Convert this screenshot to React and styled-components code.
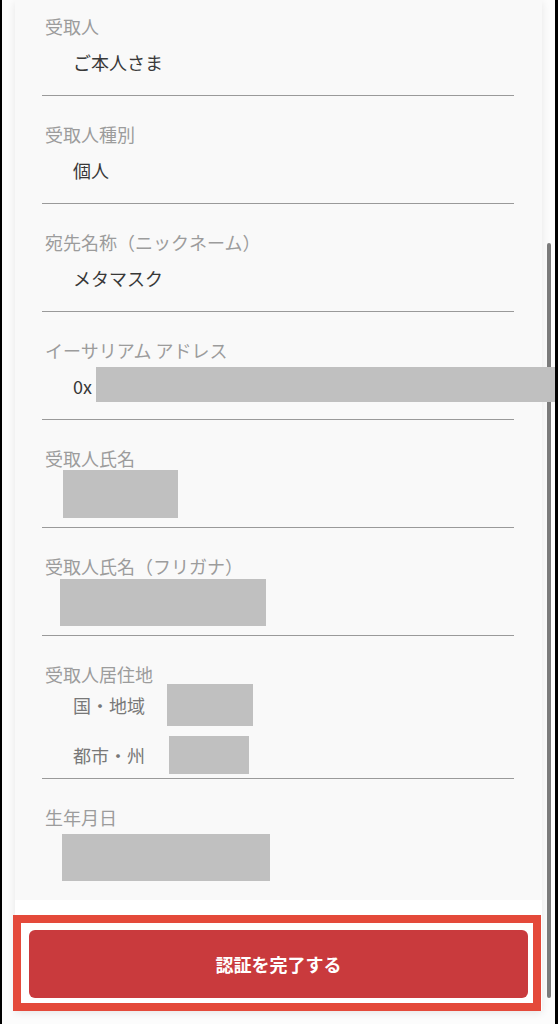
import React from 'react';
import styled, { createGlobalStyle } from 'styled-components';

const GlobalStyle = createGlobalStyle`
  html, body {
    margin: 0;
    padding: 0;
    background: #000;
  }
  body {
    font-family: "Noto Sans CJK JP", "Noto Sans", sans-serif;
  }
`;

const Screen = styled.div`
  position: relative;
  margin: 0 3px 0 2px;
  height: 1024px;
  background: #fcfcfc;
  overflow: hidden;
`;

const Panel = styled.div`
  margin: 0 13px 0 13px;
  height: 1011px;
  display: flex;
  flex-direction: column;
  background: #fff;
  box-shadow: 0 2px 8px rgba(0, 0, 0, 0.09);
`;

const Scroller = styled.div`
  flex: 1;
  background: #f9f9f9;
  padding: 0 28px 0 27px;
`;

const Field = styled.div`
  padding: ${p => (p.$first ? '14px' : '26px')} 0 ${p => p.$bottom ?? 19}px;
  border-bottom: ${p => (p.$last ? 'none' : '1px solid #9a9a9a')};
`;

const Label = styled.div`
  padding: 0 0 2px 3px;
  font-size: 18px;
  line-height: 24px;
  color: #9c9c9c;
`;

const Value = styled.div`
  margin-top: 8px;
  padding-left: 31px;
  height: 28px;
  display: flex;
  align-items: center;
  font-size: 18px;
  color: #383838;
`;

const Redacted = styled.div`
  position: relative;
  z-index: 2;
  flex: none;
  width: ${p => p.$w}px;
  height: ${p => p.$h}px;
  margin-top: ${p => p.$top || 0}px;
  margin-left: ${p => p.$left || 0}px;
  background: #c0c0c0;
`;

const SubRows = styled.div`
  margin-top: -4px;
  display: flex;
  flex-direction: column;
  gap: 10px;
  padding-left: 31px;
`;

const SubRow = styled.div`
  display: grid;
  grid-template-columns: ${p => p.$col}px auto;
  align-items: center;
  font-size: 18px;
  color: #787878;
`;

const Footer = styled.div`
  padding: 15px 1px 0 0;
  margin-left: -2px;
`;

const Highlight = styled.div`
  border: 8px solid #e4493a;
  padding: 7px 5px 5px 8px;
  background: #fff;
`;

const SubmitButton = styled.button`
  display: block;
  width: 100%;
  height: 68px;
  border: none;
  border-radius: 6px;
  background: #c93a3d;
  color: #fff;
  font-family: inherit;
  font-size: 18px;
  font-weight: 700;
  cursor: pointer;
`;

const ScrollThumb = styled.div`
  position: absolute;
  top: 243px;
  right: 4px;
  width: 4px;
  height: 755px;
  border-radius: 2px;
  background: #7b7b7b;
`;

export default function App() {
  return (
    <>
      <GlobalStyle />
      <Screen>
        <Panel>
          <Scroller>
            <Field $first>
              <Label>受取人</Label>
              <Value>ご本人さま</Value>
            </Field>
            <Field>
              <Label>受取人種別</Label>
              <Value>個人</Value>
            </Field>
            <Field>
              <Label>宛先名称（ニックネーム）</Label>
              <Value>メタマスク</Value>
            </Field>
            <Field>
              <Label>イーサリアム アドレス</Label>
              <Value>
                0x
                <Redacted $w={466} $h={35} $top={-3} $left={4} />
              </Value>
            </Field>
            <Field $bottom={9}>
              <Label>受取人氏名</Label>
              <Redacted $w={115} $h={48} $top={-2} $left={21} />
            </Field>
            <Field $bottom={9}>
              <Label>受取人氏名（フリガナ）</Label>
              <Redacted $w={206} $h={47} $top={-1} $left={18} />
            </Field>
            <Field $bottom={4}>
              <Label>受取人居住地</Label>
              <SubRows>
                <SubRow $col={94}>
                  <span>国・地域</span>
                  <Redacted $w={86} $h={42} />
                </SubRow>
                <SubRow $col={96}>
                  <span>都市・州</span>
                  <Redacted $w={80} $h={38} />
                </SubRow>
              </SubRows>
            </Field>
            <Field $last>
              <Label>生年月日</Label>
              <Redacted $w={208} $h={47} $top={3} $left={20} />
            </Field>
          </Scroller>
          <Footer>
            <Highlight>
              <SubmitButton type="button">認証を完了する</SubmitButton>
            </Highlight>
          </Footer>
        </Panel>
        <ScrollThumb />
      </Screen>
    </>
  );
}
